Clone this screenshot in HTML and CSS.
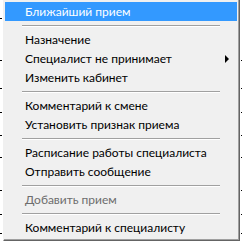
FILE: index.html
```html
<!DOCTYPE html>
<html lang="ru">
<head>
<meta charset="utf-8">
<link rel="stylesheet" href="styles.css">
</head>
<body>
<div class="screen">
  <div class="side side-left">
    <span class="tick" style="top:18px"></span>
    <span class="tick" style="top:60px"></span>
    <span class="tick" style="top:88px"></span>
    <span class="tick" style="top:112px"></span>
    <span class="tick" style="top:135px"></span>
    <span class="tick" style="top:157px"></span>
    <span class="tick" style="top:190px"></span>
    <span class="tick" style="top:214px"></span>
    <span class="tick" style="top:233px"></span>
  </div>
  <div class="menu">
    <div class="item active">Ближайший прием</div>
    <div class="sep"></div>
    <div class="item">Назначение</div>
    <div class="item has-sub">Специалист не принимает<span class="arrow"></span></div>
    <div class="item">Изменить кабинет</div>
    <div class="sep"></div>
    <div class="item">Комментарий к смене</div>
    <div class="item">Установить признак приема</div>
    <div class="sep"></div>
    <div class="item">Расписание работы специалиста</div>
    <div class="item">Отправить сообщение</div>
    <div class="sep"></div>
    <div class="item disabled">Добавить прием</div>
    <div class="sep"></div>
    <div class="item">Комментарий к специалисту</div>
  </div>
  <div class="side side-right">
    <span class="tick" style="top:60px"></span>
    <span class="tick" style="top:88px"></span>
    <span class="tick" style="top:112px"></span>
    <span class="tick" style="top:135px"></span>
    <span class="tick" style="top:157px"></span>
    <span class="tick" style="top:190px"></span>
    <span class="tick" style="top:214px"></span>
    <span class="tick" style="top:233px"></span>
  </div>
</div>
</body>
</html>
```

FILE: styles.css
```css
html, body {
  margin: 0;
  padding: 0;
  background: #ffffff;
  overflow: hidden;
}
.screen {
  display: flex;
  width: 242px;
  height: 241px;
  font-family: Lato, "Noto Sans", sans-serif;
  font-size: 12px;
}
.side {
  position: relative;
  flex: none;
  background: #ffffff;
}
.side-left {
  width: 3px;
}
.side-right {
  width: 2px;
}
.tick {
  position: absolute;
  left: 0;
  width: 2px;
  height: 1px;
  background: #000;
}
.side-right .tick {
  left: 1px;
  width: 1px;
}
.menu {
  flex: none;
  width: 232px;
  height: 237px;
  padding: 2px 2px 1px 1px;
  background: #f0f0f0;
  border-left: 1px solid #f0f0f0;
  border-right: 1px solid #646464;
  border-bottom: 1px solid #646464;
  box-shadow: inset -1px -1px 0 #a0a0a0;
  color: #000;
  display: flex;
  flex-direction: column;
}
.item {
  position: relative;
  flex: none;
  height: 19px;
  line-height: 19px;
  padding-left: 20px;
  white-space: nowrap;
}
.item.active {
  background: #3399ff;
  color: #ffffff;
}
.item.disabled {
  color: #6d6d6d;
}
.arrow {
  position: absolute;
  right: 8px;
  top: 6px;
  width: 0;
  height: 0;
  border-top: 4px solid transparent;
  border-bottom: 4px solid transparent;
  border-left: 4px solid #000;
}
.sep {
  flex: none;
  height: 9px;
  display: flex;
  align-items: center;
  padding-left: 17px;
  padding-right: 17px;
}
.sep::before {
  content: "";
  flex: 1;
  height: 1px;
  background: #a0a0a0;
  box-shadow: 0 1px 0 #ffffff;
}
```
